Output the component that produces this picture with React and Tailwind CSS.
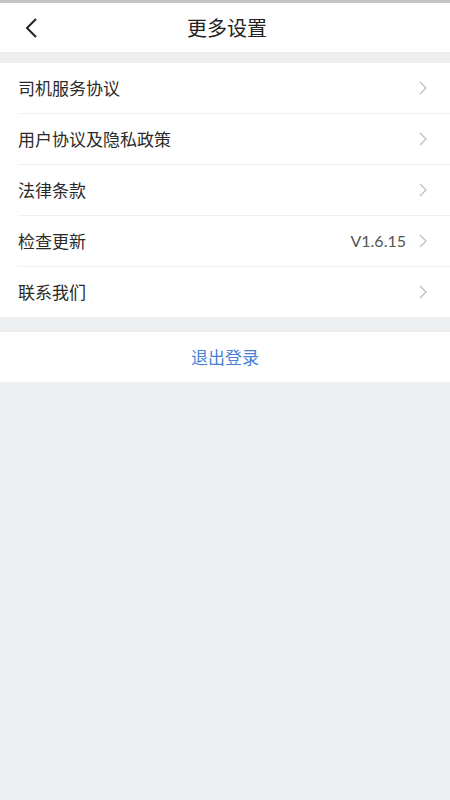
import React from 'react';

const items = [
  { label: '司机服务协议' },
  { label: '用户协议及隐私政策' },
  { label: '法律条款' },
  { label: '检查更新', value: 'V1.6.15' },
  { label: '联系我们' },
];

const Chevron = () => (
  <svg width="10" height="16" viewBox="0 0 10 16" fill="none" className="ml-3">
    <path d="M2 2l6 6-6 6" stroke="#bdbdbd" strokeWidth="1.3" />
  </svg>
);

export default function App() {
  return (
    <div
      className="w-[450px] h-[800px] bg-[#eeeff1] flex flex-col"
      style={{ fontFamily: '"Noto Sans CJK SC", "Noto Sans", sans-serif' }}
    >
      <div className="h-[3px] bg-[#c4c4c4]" />
      <div className="h-[49px] bg-white flex items-center relative">
        <div className="absolute left-[24px] top-[14px]">
          <svg width="16" height="22" viewBox="0 0 16 22" fill="none">
            <path d="M12 2L3 11l9 9" stroke="#222" strokeWidth="2" />
          </svg>
        </div>
        <div className="flex-1 text-center text-[20px] text-[#222] pl-[4px]">更多设置</div>
      </div>
      <div className="h-[11px]" />
      <div className="bg-white">
        {items.map((it, i) => (
          <div key={it.label} className="pl-[18px]">
            <div
              className={
                'flex items-center pr-[22px] ' +
                (i < items.length - 1 ? 'h-[51px] border-b border-[#f0f0f0]' : 'h-[50px]')
              }
            >
              <span className="flex-1 text-[17px] text-[#2a2a2a]">{it.label}</span>
              {it.value && (
                <span className="text-[16px] text-[#555]" style={{ fontFamily: 'Lato, "Noto Sans", sans-serif' }}>
                  {it.value}
                </span>
              )}
              <Chevron />
            </div>
          </div>
        ))}
      </div>
      <div className="h-[15px]" />
      <div className="h-[50px] bg-white flex items-center justify-center text-[17px] text-[#4a7fd6]">
        退出登录
      </div>
      <div className="flex-1" />
    </div>
  );
}
